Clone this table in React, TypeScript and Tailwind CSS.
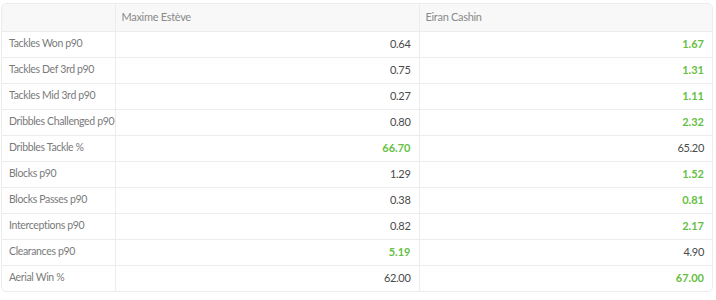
const PLAYERS = ["Maxime Estève", "Eiran Cashin"];

const ROWS: { label: string; a: string; b: string; best: "a" | "b" }[] = [
  { label: "Tackles Won p90", a: "0.64", b: "1.67", best: "b" },
  { label: "Tackles Def 3rd p90", a: "0.75", b: "1.31", best: "b" },
  { label: "Tackles Mid 3rd p90", a: "0.27", b: "1.11", best: "b" },
  { label: "Dribbles Challenged p90", a: "0.80", b: "2.32", best: "b" },
  { label: "Dribbles Tackle %", a: "66.70", b: "65.20", best: "a" },
  { label: "Blocks p90", a: "1.29", b: "1.52", best: "b" },
  { label: "Blocks Passes p90", a: "0.38", b: "0.81", best: "b" },
  { label: "Interceptions p90", a: "0.82", b: "2.17", best: "b" },
  { label: "Clearances p90", a: "5.19", b: "4.90", best: "a" },
  { label: "Aerial Win %", a: "62.00", b: "67.00", best: "b" },
];

function valueClass(best: boolean) {
  return best ? "font-bold text-[#66c043] tracking-normal" : "text-[#4a4a4a]";
}

export default function App() {
  return (
    <div className="w-[716px] h-[300px] bg-white pt-[3px] pl-[1px] font-['Lato','Liberation_Sans',sans-serif] text-[11px] tracking-[-0.3px]">
      <div className="w-[712px] overflow-hidden rounded-[5px] border border-[#ececec]">
        <table className="w-full table-fixed border-collapse">
          <colgroup>
            <col className="w-[113px]" />
            <col className="w-[304px]" />
            <col />
          </colgroup>
          <thead>
            <tr className="h-[27px] bg-[#f8f8f8]">
              <th />
              {PLAYERS.map((p) => (
                <th
                  key={p}
                  className="border-l border-[#ececec] px-[6px] text-left font-normal text-[#8a8a8a]"
                >
                  {p}
                </th>
              ))}
            </tr>
          </thead>
          <tbody>
            {ROWS.map((row) => (
              <tr key={row.label} className="h-[26px] border-t border-[#ececec]">
                <td className="whitespace-nowrap pl-[7px] text-[10.5px] tracking-[-0.35px] text-[#7a7a7a]">
                  {row.label}
                </td>
                <td className={`border-l border-[#ececec] px-[8px] text-right ${valueClass(row.best === "a")}`}>
                  {row.a}
                </td>
                <td className={`border-l border-[#ececec] px-[8px] text-right ${valueClass(row.best === "b")}`}>
                  {row.b}
                </td>
              </tr>
            ))}
          </tbody>
        </table>
      </div>
    </div>
  );
}
